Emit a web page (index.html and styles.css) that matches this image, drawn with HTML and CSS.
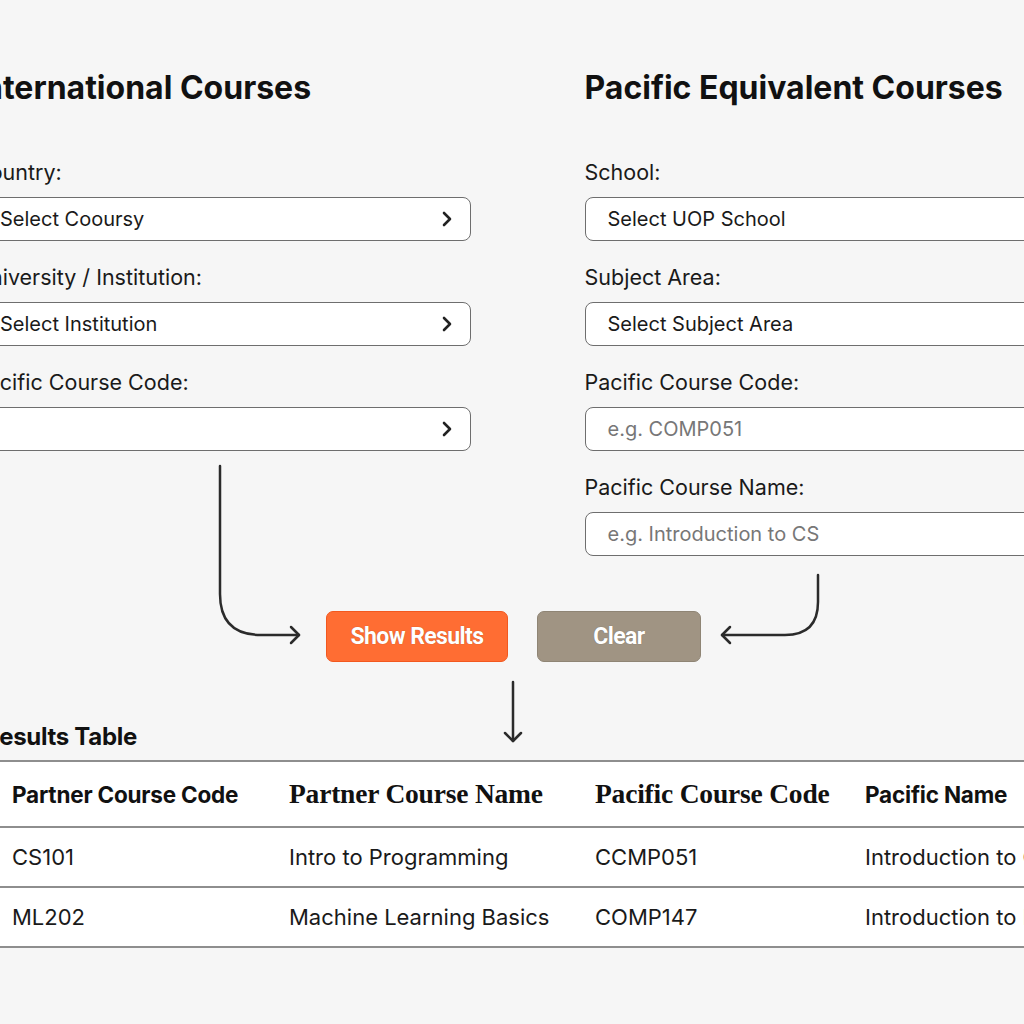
FILE: index.html
```html
<!DOCTYPE html>
<html>
<head>
<meta charset="utf-8">
<link rel="stylesheet" href="styles.css">
</head>
<body>
<div class="page">
  <div class="columns">
    <section class="col">
      <h2 class="col-title">International Courses</h2>
      <div class="field">
        <label class="label">Country:</label>
        <div class="input select"><span>Select Cooursy</span><svg class="chev" viewBox="0 0 12 16"><path d="M3 2 L9 8 L3 14"/></svg></div>
      </div>
      <div class="field">
        <label class="label">University / Institution:</label>
        <div class="input select"><span>Select Institution</span><svg class="chev" viewBox="0 0 12 16"><path d="M3 2 L9 8 L3 14"/></svg></div>
      </div>
      <div class="field">
        <label class="label">Pacific Course Code:</label>
        <div class="input select"><span></span><svg class="chev" viewBox="0 0 12 16"><path d="M3 2 L9 8 L3 14"/></svg></div>
      </div>
    </section>
    <section class="col">
      <h2 class="col-title">Pacific Equivalent Courses</h2>
      <div class="field">
        <label class="label">School:</label>
        <div class="input select"><span>Select UOP School</span><svg class="chev faint" viewBox="0 0 12 16"><path d="M3 2 L9 8 L3 14"/></svg></div>
      </div>
      <div class="field">
        <label class="label">Subject Area:</label>
        <div class="input select"><span>Select Subject Area</span><svg class="chev faint" viewBox="0 0 12 16"><path d="M3 2 L9 8 L3 14"/></svg></div>
      </div>
      <div class="field">
        <label class="label">Pacific Course Code:</label>
        <div class="input"><span class="ph">e.g. COMP051</span></div>
      </div>
      <div class="field">
        <label class="label">Pacific Course Name:</label>
        <div class="input"><span class="ph">e.g. Introduction to CS</span></div>
      </div>
    </section>
  </div>

  <div class="actions">
    <button class="btn btn-primary">Show Results</button>
    <button class="btn btn-secondary">Clear</button>
  </div>

  <h3 class="results-title">Results Table</h3>

  <table class="results">
    <colgroup>
      <col class="c1"><col class="c2"><col class="c3"><col class="c4">
    </colgroup>
    <thead>
      <tr>
        <th class="sans">Partner Course Code</th>
        <th class="serif">Partner Course Name</th>
        <th class="serif">Pacific Course Code</th>
        <th class="sans">Pacific Name</th>
      </tr>
    </thead>
    <tbody>
      <tr><td>CS101</td><td>Intro to Programming</td><td>CCMP051</td><td>Introduction to CS</td></tr>
      <tr><td>ML202</td><td>Machine Learning Basics</td><td>COMP147</td><td>Introduction to ML</td></tr>
    </tbody>
  </table>
</div>

<svg class="flow" viewBox="0 0 1024 1024" width="1024" height="1024">
  <path d="M220 466 V594 Q220 635 261 635 H299"/>
  <path d="M291 627 L299 635 L291 643"/>
  <path d="M818 575 V602 Q818 635 785 635 H722"/>
  <path d="M730 627 L722 635 L730 643"/>
  <path d="M513 682 V741"/>
  <path d="M505 733 L513 741 L521 733"/>
</svg>
</body>
</html>
```

FILE: styles.css
```css
html, body {
  margin: 0;
  padding: 0;
}
body {
  background: #f6f6f6;
  width: 1024px;
  height: 1024px;
  overflow: hidden;
  position: relative;
  font-family: Inter, "Noto Sans", "Liberation Sans", sans-serif;
  color: #111;
}
.page {
  margin-left: -26px;
  width: 1107px;
}
.columns {
  display: flex;
  gap: 114px;
}
.col {
  width: 497px;
  display: flex;
  flex-direction: column;
}
.col-title {
  margin: 68px 0 52px 0;
  font-size: 32px;
  line-height: 40px;
  font-weight: 700;
}
.field {
  display: flex;
  flex-direction: column;
  margin-bottom: 24px;
}
.label {
  font-size: 21.5px;
  line-height: 24px;
  color: #1a1a1a;
  margin-bottom: 13px;
}
.input {
  height: 44px;
  box-sizing: border-box;
  background: #fff;
  border: 1.5px solid #6e6e6e;
  border-radius: 8px;
  display: flex;
  align-items: center;
  justify-content: space-between;
  padding: 0 22px;
  font-size: 20px;
  color: #1a1a1a;
}
.col:first-child .input {
  padding-left: 25px;
  padding-right: 17px;
}
.ph {
  color: #777;
}
.chev {
  width: 12px;
  height: 16px;
  fill: none;
  stroke: #222;
  stroke-width: 2.6;
  stroke-linecap: round;
  stroke-linejoin: round;
}
.chev.faint {
  stroke: #aaa;
}
.actions {
  display: flex;
  gap: 29px;
  margin-top: 31px;
  padding-left: 352px;
}
.btn {
  height: 51px;
  border-radius: 7px;
  font-family: Roboto, "Liberation Sans", sans-serif;
  font-weight: 700;
  font-size: 23px;
  color: #fff;
  letter-spacing: -0.6px;
  text-shadow: 0 0 1px rgba(0,0,0,0.35);
  cursor: pointer;
}
.btn-primary {
  width: 182px;
  background: #ff6d33;
  border: 1.5px solid #f2581f;
}
.btn-secondary {
  width: 164px;
  background: #a09483;
  border: 1.5px solid #8f8575;
}
.results-title {
  margin: 60px 0 8px 10px;
  font-size: 24px;
  line-height: 30px;
  font-weight: 700;
  letter-spacing: -0.3px;
}
.results {
  margin-left: 26px;
  width: 1081px;
  border-collapse: collapse;
  table-layout: fixed;
  background: #fff;
}
.c1 { width: 277px; }
.c2 { width: 306px; }
.c3 { width: 270px; }
.results th,
.results td {
  text-align: left;
  padding: 0 12px;
  white-space: nowrap;
  overflow: hidden;
}
.results thead tr {
  border-top: 2px solid #8e8e8e;
  border-bottom: 2px solid #8e8e8e;
  height: 66px;
}
.results tbody tr {
  border-bottom: 2px solid #8e8e8e;
  height: 60px;
}
.results th.sans {
  font-family: Inter, "Noto Sans", sans-serif;
  font-weight: 700;
  font-size: 22.5px;
  letter-spacing: -0.2px;
}
.results th.serif {
  font-family: "Liberation Serif", "DejaVu Serif", serif;
  font-weight: 700;
  font-size: 27.5px;
  letter-spacing: -0.2px;
}
.results td {
  font-size: 22px;
  color: #1a1a1a;
}
.flow {
  position: absolute;
  left: 0;
  top: 0;
  pointer-events: none;
  fill: none;
  stroke: #2b2b2b;
  stroke-width: 2.5;
  stroke-linecap: round;
  stroke-linejoin: round;
}
```
